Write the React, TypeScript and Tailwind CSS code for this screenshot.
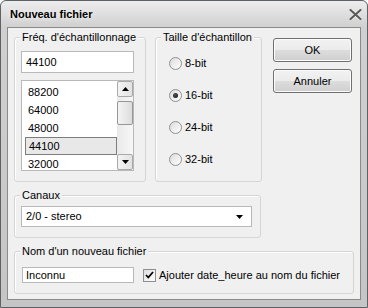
import React from "react";

function Group({
  title,
  className,
  children,
}: {
  title: string;
  className?: string;
  children?: React.ReactNode;
}) {
  return (
    <div
      className={
        "relative rounded-[3px] border border-[#d5d5d5] shadow-[inset_1px_1px_0_#ffffff] " +
        (className ?? "")
      }
    >
      <span className="absolute left-[5px] top-[-7px] bg-[#f0f0f0] px-[2px] leading-[13px] whitespace-nowrap">
        {title}
      </span>
      {children}
    </div>
  );
}

function Radio({ checked, label }: { checked?: boolean; label: string }) {
  return (
    <div className="flex h-[32px] items-center">
      <div className="flex h-[13px] w-[13px] items-center justify-center rounded-full border border-[#8e8f8f] bg-[linear-gradient(135deg,#dcdcdc,#ffffff)]">
        {checked && (
          <div className="h-[5px] w-[5px] rounded-full bg-[radial-gradient(circle_at_40%_40%,#555,#0a0a0a)]" />
        )}
      </div>
      <span className="ml-[3px] leading-[13px]">{label}</span>
    </div>
  );
}

function ScrollButton({ up }: { up?: boolean }) {
  return (
    <div className="flex h-[16px] w-[16px] items-center justify-center rounded-[2px] border border-[#a9a9a9] bg-[linear-gradient(90deg,#f4f4f4,#e2e2e2)]">
      <svg width="7" height="4" viewBox="0 0 7 4">
        {up ? (
          <path d="M3.5 0 L7 4 L0 4 Z" fill="#000" />
        ) : (
          <path d="M0 0 L7 0 L3.5 4 Z" fill="#000" />
        )}
      </svg>
    </div>
  );
}

export default function App() {
  const items = ["88200", "64000", "48000", "44100", "32000"];
  return (
    <div className="flex h-[308px] w-[368px] flex-col overflow-hidden rounded-t-[6px] border border-[#5e6166] bg-[linear-gradient(#ededed,#d0d0d0_26px,#c5c5c5)] font-['Liberation_Sans',Arial,sans-serif] text-[11px] text-black">
      {/* title bar */}
      <div className="flex h-[26px] shrink-0 items-center justify-between pl-[9px] pr-[5px]">
        <span className="text-[11px] font-bold leading-[13px] [text-shadow:0_0_5px_#ffffff]">
          Nouveau fichier
        </span>
        <svg width="13" height="11" viewBox="0 0 13 11">
          <path
            d="M1.5 1 L11.5 10 M11.5 1 L1.5 10"
            stroke="#ffffff"
            strokeWidth="3.6"
            strokeLinecap="round"
            opacity="0.6"
          />
          <path
            d="M1.5 1 L11.5 10 M11.5 1 L1.5 10"
            stroke="#5d5d5d"
            strokeWidth="2.2"
            strokeLinecap="round"
          />
        </svg>
      </div>

      {/* content */}
      <div className="mx-[6px] mb-[7px] flex flex-1 flex-col border border-[#8a8a8a] bg-[#f0f0f0] pl-[6px] pr-[8px] pt-[9px]">
        <div className="flex">
          {/* Fréq group */}
          <Group title="Fréq. d'échantillonnage" className="h-[145px] w-[132px]">
            <div className="pl-[6px] pt-[13px]">
              <div className="flex h-[22px] w-[113px] items-center border border-[#b9b9b9] bg-white pl-[4px]">
                44100
              </div>
              <div className="mt-[7px] flex h-[91px] w-[113px] border border-[#b9b9b9] bg-white">
                <div className="flex-1 overflow-hidden pt-[2px]">
                  {items.map((it) => (
                    <div
                      key={it}
                      className={
                        "ml-[3px] flex h-[18px] items-center pl-[3px] " +
                        (it === "44100"
                          ? "border border-[#7d7d7d] bg-[#e8e8e8] pl-[2px]"
                          : "")
                      }
                    >
                      {it}
                    </div>
                  ))}
                </div>
                <div className="flex w-[16px] flex-col bg-[linear-gradient(90deg,#e9e9e9,#f7f7f7)]">
                  <ScrollButton up />
                  <div className="mt-[4px] h-[24px] w-[16px] rounded-[2px] border border-[#979797] bg-[linear-gradient(90deg,#f4f4f4,#dcdcdc)]" />
                  <div className="flex-1" />
                  <ScrollButton />
                </div>
              </div>
            </div>
          </Group>

          {/* Taille group */}
          <Group title="Taille d'échantillon" className="ml-[9px] h-[145px] w-[107px]">
            <div className="pl-[13px] pt-[9px]">
              <Radio label="8-bit" />
              <Radio label="16-bit" checked />
              <Radio label="24-bit" />
              <Radio label="32-bit" />
            </div>
          </Group>

          {/* buttons */}
          <div className="ml-[11px] flex w-[79px] flex-col gap-[7px] pt-[1px]">
            <button className="h-[24px] w-full rounded-[3px] border border-[#707070] bg-[linear-gradient(#f2f2f2,#ebebeb_50%,#dddddd_50%,#cfcfcf)] leading-[13px] shadow-[inset_0_0_0_1px_#fcfcfc]">
              OK
            </button>
            <button className="h-[24px] w-full rounded-[3px] border border-[#707070] bg-[linear-gradient(#f2f2f2,#ebebeb_50%,#dddddd_50%,#cfcfcf)] leading-[13px] shadow-[inset_0_0_0_1px_#fcfcfc]">
              Annuler
            </button>
          </div>
        </div>

        {/* Canaux */}
        <Group title="Canaux" className="mt-[13px] h-[43px] w-[247px]">
          <div className="pl-[6px] pt-[10px]">
            <div className="flex h-[21px] w-[231px] items-center justify-between border border-[#b9b9b9] bg-white pl-[4px] pr-[8px]">
              <span>2/0 - stereo</span>
              <svg width="7" height="4" viewBox="0 0 7 4">
                <path d="M0 0 L7 0 L3.5 4 Z" fill="#000" />
              </svg>
            </div>
          </div>
        </Group>

        {/* Nom */}
        <Group title="Nom d'un nouveau fichier" className="mt-[13px] h-[43px] w-[340px]">
          <div className="flex items-center pl-[7px] pt-[15px]">
            <div className="flex h-[16px] w-[112px] items-center border border-[#b9b9b9] bg-white pl-[3px]">
              Inconnu
            </div>
            <div className="ml-[9px] flex h-[13px] w-[13px] items-center justify-center border border-[#8e8f8f] bg-[linear-gradient(135deg,#dedede,#ffffff)]">
              <svg width="9" height="8" viewBox="0 0 9 8">
                <path
                  d="M1 4 L3.3 6.5 L8 1"
                  stroke="#000"
                  strokeWidth="1.8"
                  fill="none"
                />
              </svg>
            </div>
            <span className="ml-[3px]">Ajouter date_heure au nom du fichier</span>
          </div>
        </Group>
      </div>
    </div>
  );
}
